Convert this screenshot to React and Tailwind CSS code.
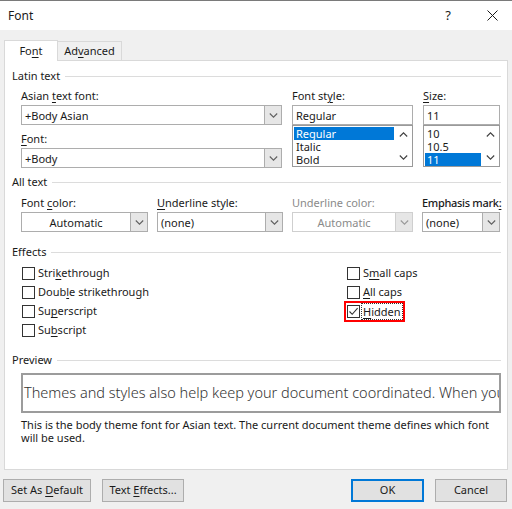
import React from "react";

const U = ({ children }) => (
  <span className="underline decoration-1 underline-offset-[2px]">{children}</span>
);

const Chevron = ({ up = false, color = "#5f5f5f" }) => (
  <svg width="9" height="5" viewBox="0 0 9 5" className="block">
    <path
      d={up ? "M0.8 4.5 L4.5 0.8 L8.2 4.5" : "M0.8 0.5 L4.5 4.2 L8.2 0.5"}
      stroke={color}
      strokeWidth="1.1"
      fill="none"
    />
  </svg>
);

function Combo({ text, center = false, disabled = false, className = "" }) {
  return (
    <div
      className={`flex h-[20px] border bg-white ${
        disabled ? "border-[#cfcfcf]" : "border-[#adadad]"
      } ${className}`}
    >
      <div
        className={`flex flex-1 items-center px-[3px] leading-none ${
          center ? "justify-center" : ""
        } ${disabled ? "text-[#8a8a8a]" : "text-[#1a1a1a]"}`}
      >
        <span>{text}</span>
      </div>
      <div
        className={`flex w-[17px] items-center justify-center border-l bg-[#e6e6e6] ${
          disabled ? "border-[#cfcfcf]" : "border-[#adadad]"
        }`}
      >
        <Chevron color={disabled ? "#9a9a9a" : "#606060"} />
      </div>
    </div>
  );
}

function TextInput({ text }) {
  return (
    <div className="flex h-[20px] items-center border border-[#adadad] bg-white px-[3px] leading-none text-[#1a1a1a]">
      <span>{text}</span>
    </div>
  );
}

function ListBox({ items, selected }) {
  return (
    <div className="flex h-[42px] border border-[#9a9a9a] bg-white">
      <div className="flex-1 pl-[1px] pt-[1px]">
        {items.map((it, i) => (
          <div
            key={it}
            className={`h-[13px] pl-[2px] leading-[13px] ${
              i === selected ? "bg-[#0078d7] text-white" : "text-[#1a1a1a]"
            }`}
          >
            {it}
          </div>
        ))}
      </div>
      <div className="flex w-[18px] flex-col items-center justify-between py-[6px]">
        <Chevron up color="#404040" />
        <Chevron color="#404040" />
      </div>
    </div>
  );
}

function SectionHeader({ title }) {
  return (
    <div className="flex h-[16px] items-center gap-[5px] leading-[16px]">
      <span className="text-[#1a1a1a]">{title}</span>
      <div className="h-px flex-1 bg-[#dcdcdc]" />
    </div>
  );
}

function Label({ children, disabled = false, className = "" }) {
  return (
    <div
      className={`h-[16px] leading-[16px] ${
        disabled ? "text-[#8a8a8a]" : "text-[#1a1a1a]"
      } ${className}`}
    >
      {children}
    </div>
  );
}

function CheckBox({ checked = false }) {
  return (
    <div className="flex h-[13px] w-[13px] items-center justify-center border border-[#333333] bg-white">
      {checked && (
        <svg width="11" height="11" viewBox="0 0 11 11" className="block">
          <path d="M1.5 5.5 L4.2 8.3 L9.6 2.2" stroke="#333" strokeWidth="1.1" fill="none" />
        </svg>
      )}
    </div>
  );
}

function CheckRow({ children }) {
  return (
    <div className="flex h-[19px] items-center gap-[3px]">
      <CheckBox />
      <span className="text-[#1a1a1a]">{children}</span>
    </div>
  );
}

function Button({ children, primary = false, className = "" }) {
  return (
    <div
      className={`flex h-[23px] items-center justify-center bg-[#e1e1e1] text-[#1a1a1a] ${
        primary ? "border-2 border-[#0078d7]" : "border border-[#adadad]"
      } ${className}`}
    >
      <span>{children}</span>
    </div>
  );
}

export default function App() {
  return (
    <div className="flex h-[509px] w-[512px] flex-col overflow-hidden border-t border-[#7a7a7a] bg-[#f0f0f0] font-['Noto_Sans',sans-serif] text-[11px]">
      {/* Title bar */}
      <div className="flex h-[29px] items-center bg-white pl-[8px]">
        <span className="flex-1 text-[12px] text-[#1a1a1a]">Font</span>
        <span className="mr-[36px] text-[13px] text-[#1a1a1a]">?</span>
        <svg width="11" height="11" viewBox="0 0 11 11" className="mr-[14px] block">
          <path d="M0.5 0.5 L10.5 10.5 M10.5 0.5 L0.5 10.5" stroke="#1a1a1a" strokeWidth="1" />
        </svg>
      </div>

      {/* Tabs */}
      <div className="flex h-[30px] items-end px-[4px]">
        <div className="relative z-10 -mb-px flex h-[21px] w-[54px] items-center justify-center border border-b-0 border-[#d9d9d9] bg-white text-[#1a1a1a]">
          <span>
            Fo<U>n</U>t
          </span>
        </div>
        <div className="flex h-[19px] w-[64px] items-center justify-center border border-b-0 border-l-0 border-[#d9d9d9] bg-[#f0f0f0] text-[#1a1a1a]">
          <span>
            Ad<U>v</U>anced
          </span>
        </div>
      </div>

      {/* Panel */}
      <div className="mx-[4px] flex h-[410px] flex-col border border-[#d9d9d9] bg-white pl-[7px] pr-[6px] pt-[7px]">
        <SectionHeader title="Latin text" />
        <div className="mt-[4px] flex gap-[10px] pl-[9px]">
          <div className="flex w-[261px] flex-col">
            <Label>
              Asian <U>t</U>ext font:
            </Label>
            <Combo text="+Body Asian" className="mt-[1px]" />
            <Label className="mt-[6px]">
              <U>F</U>ont:
            </Label>
            <Combo text="+Body" className="mt-[1px]" />
          </div>
          <div className="flex w-[121px] flex-col">
            <Label>
              Font st<U>y</U>le:
            </Label>
            <div className="mt-[1px]">
              <TextInput text="Regular" />
            </div>
            <ListBox items={["Regular", "Italic", "Bold"]} selected={0} />
          </div>
          <div className="flex w-[77px] flex-col">
            <Label>
              <U>S</U>ize:
            </Label>
            <div className="mt-[1px]">
              <TextInput text="11" />
            </div>
            <ListBox items={["10", "10.5", "11"]} selected={2} />
          </div>
        </div>

        <div className="mt-[6px]">
          <SectionHeader title="All text" />
        </div>
        <div className="mt-[5px] flex gap-[9px] pl-[9px]">
          <div className="flex w-[127px] flex-col">
            <Label>
              Font <U>c</U>olor:
            </Label>
            <Combo text="Automatic" center className="mt-[1px]" />
          </div>
          <div className="flex w-[126px] flex-col">
            <Label>
              <U>U</U>nderline style:
            </Label>
            <Combo text="(none)" className="mt-[1px]" />
          </div>
          <div className="flex w-[121px] flex-col">
            <Label disabled>Underline color:</Label>
            <Combo text="Automatic" center disabled className="mt-[1px]" />
          </div>
          <div className="flex w-[78px] flex-col">
            <Label className="whitespace-nowrap font-medium tracking-[-0.3px]">
              Emphasis mark<U>:</U>
            </Label>
            <Combo text="(none)" className="mt-[1px]" />
          </div>
        </div>

        <div className="mt-[12px]">
          <SectionHeader title="Effects" />
        </div>
        <div className="mt-[4px] flex pl-[10px]">
          <div className="flex w-[325px] flex-col">
            <CheckRow>
              Stri<U>k</U>ethrough
            </CheckRow>
            <CheckRow>
              Doub<U>l</U>e strikethrough
            </CheckRow>
            <CheckRow>
              Su<U>p</U>erscript
            </CheckRow>
            <CheckRow>
              Su<U>b</U>script
            </CheckRow>
          </div>
          <div className="flex flex-col">
            <CheckRow>
              S<U>m</U>all caps
            </CheckRow>
            <CheckRow>
              <U>A</U>ll caps
            </CheckRow>
            <div className="flex h-[19px] items-center">
              <div className="-ml-[1px] flex h-[17px] items-center gap-[2px] pl-[1px] pr-[1px] ring-2 ring-[#ff0000]">
                <CheckBox checked />
                <span className="px-[1px] leading-[15px] text-[#1a1a1a] outline-1 outline-dotted outline-[#333]">
                  <U>H</U>idden
                </span>
              </div>
            </div>
          </div>
        </div>

        <div className="mt-[12px]">
          <SectionHeader title="Preview" />
        </div>
        <div className="ml-[9px] mt-[5px] flex h-[40px] items-center overflow-hidden border-2 border-[#9c9c9c] bg-white pl-[1px]">
          <span className="whitespace-nowrap text-[14.5px] font-light text-[#333333]">
            Themes and styles also help keep your document coordinated. When you
          </span>
        </div>
        <div className="ml-[9px] mt-[5px] text-[11px] leading-[13px] text-[#1a1a1a]">
          This is the body theme font for Asian text. The current document theme defines which font
          <br />
          will be used.
        </div>
      </div>

      {/* Buttons */}
      <div className="mt-[9px] flex justify-between pl-[3px] pr-[5px]">
        <div className="flex gap-[11px]">
          <Button className="w-[88px]">
            Set As <U>D</U>efault
          </Button>
          <Button className="w-[82px]">
            Text <U>E</U>ffects...
          </Button>
        </div>
        <div className="flex gap-[11px]">
          <Button primary className="w-[73px]">
            OK
          </Button>
          <Button className="w-[72px]">Cancel</Button>
        </div>
      </div>
    </div>
  );
}
